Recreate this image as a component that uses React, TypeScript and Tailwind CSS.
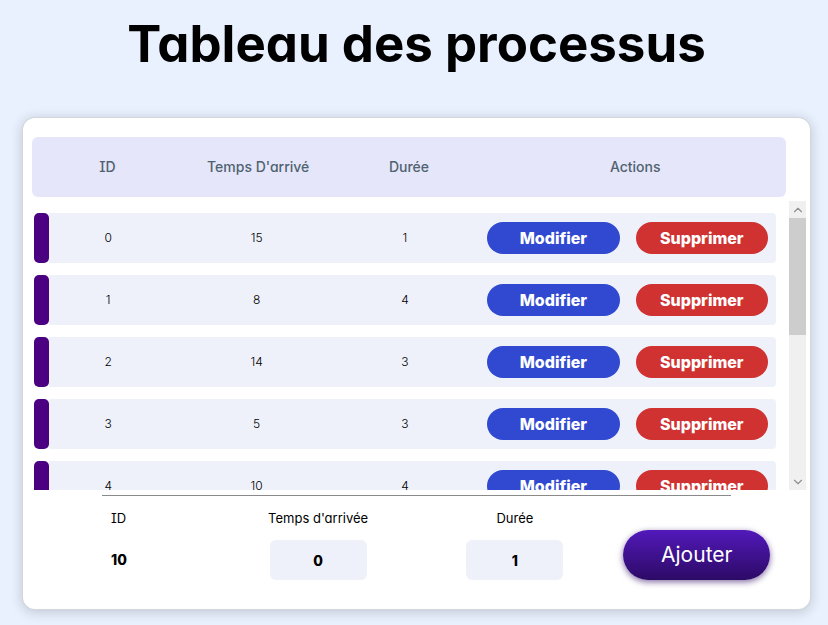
import { useRef, useState } from "react";
import type { UIEvent } from "react";
import { ChevronDown, ChevronUp } from "lucide-react";

type Process = { id: number; arrival: number; duration: number };

const processes: Process[] = [
  { id: 0, arrival: 15, duration: 1 },
  { id: 1, arrival: 8, duration: 4 },
  { id: 2, arrival: 14, duration: 3 },
  { id: 3, arrival: 5, duration: 3 },
  { id: 4, arrival: 10, duration: 4 },
  { id: 5, arrival: 7, duration: 2 },
  { id: 6, arrival: 3, duration: 5 },
  { id: 7, arrival: 12, duration: 1 },
  { id: 8, arrival: 9, duration: 2 },
  { id: 9, arrival: 6, duration: 4 },
];

const ROW_PITCH = 62;
const THUMB_SHARE = 46;

function ProcessRow({ process }: { process: Process }) {
  return (
    <tr className="h-[50px] bg-[#eef1f9]">
      <td className="bg-white p-0">
        <div className="flex h-[50px] items-center bg-linear-to-r from-white from-10% to-[#eef1f9] to-10%">
          <span className="h-full w-[15px] rounded-[5px] bg-[#4b0082]" />
          <span className="flex-1 pr-[15px] text-center">{process.id}</span>
        </div>
      </td>
      <td className="p-0">{process.arrival}</td>
      <td className="p-0">{process.duration}</td>
      <td className="px-2 py-0">
        <button type="button" className="block h-8 w-full rounded-full bg-[#3149d1] text-base font-extrabold text-white">
          Modifier
        </button>
      </td>
      <td className="rounded-r px-2 py-0">
        <button type="button" className="block h-8 w-full rounded-full bg-[#d03131] text-base font-extrabold text-white">
          Supprimer
        </button>
      </td>
    </tr>
  );
}

function ProcessList() {
  const listRef = useRef<HTMLDivElement>(null);
  const [progress, setProgress] = useState(0);

  const onScroll = (event: UIEvent<HTMLDivElement>) => {
    const el = event.currentTarget;
    setProgress(el.scrollTop / (el.scrollHeight - el.clientHeight));
  };
  const scrollRows = (count: number) => listRef.current?.scrollBy({ top: count * ROW_PITCH });

  return (
    <div className="mt-1 flex h-[289px] gap-[13px]">
      <div ref={listRef} onScroll={onScroll} className="flex-1 overflow-y-auto pl-0.5 [scrollbar-width:none]">
        <table className="w-full table-fixed border-separate border-spacing-x-0 border-spacing-y-3 text-center text-xs font-light">
          <tbody>
            {processes.map((process) => (
              <ProcessRow key={process.id} process={process} />
            ))}
          </tbody>
        </table>
      </div>
      <div className="flex w-[17px] flex-col bg-[#f0f0f0] text-[#8f8f8f]">
        <button type="button" aria-label="Monter" onClick={() => scrollRows(-1)} className="flex h-[17px] items-center justify-center">
          <ChevronUp size={14} strokeWidth={2} />
        </button>
        <div className="flex-1">
          <div className="relative h-full">
            <div
              className="absolute inset-x-0 bg-[#cdcdcd]"
              style={{ height: `${THUMB_SHARE}%`, top: `${progress * (100 - THUMB_SHARE)}%` }}
            />
          </div>
        </div>
        <button type="button" aria-label="Descendre" onClick={() => scrollRows(1)} className="flex h-[17px] items-center justify-center">
          <ChevronDown size={14} strokeWidth={2} />
        </button>
      </div>
    </div>
  );
}

function NumberField({ id, label, value }: { id: string; label: string; value: string }) {
  return (
    <div className="flex flex-col items-center">
      <label htmlFor={id} className="h-8 text-[13px] leading-5">
        {label}
      </label>
      <input
        id={id}
        type="text"
        inputMode="numeric"
        defaultValue={value}
        className="h-10 w-[97px] rounded-md bg-[#eef1f9] text-center text-sm font-extrabold"
      />
    </div>
  );
}

export default function App() {
  return (
    <main className="min-h-screen bg-[#e9f1ff] pt-2 pr-[18px] pb-3 pl-[23px] font-['Inter','Liberation_Sans',sans-serif] text-black [font-feature-settings:'cv11','cv08']">
      <h1 className="text-center text-[51px] leading-[72px] font-bold">Tableau des processus</h1>
      <section className="mt-[38px] rounded-xl bg-white pt-[19px] pb-[29px] shadow-[0_0_0_1px_#d3d7dc,0_2px_12px_2px_rgba(0,0,0,0.16)]">
        <div className="pr-1 pl-[9px]">
          <div className="pr-5">
            <table className="w-full table-fixed border-separate border-spacing-0">
              <thead>
                <tr className="h-[60px] text-sm text-[#4f6270]">
                  <th scope="col" className="rounded-l-md bg-[#e6e6fa] p-0 font-medium">ID</th>
                  <th scope="col" className="bg-[#e6e6fa] p-0 font-medium">Temps D'arrivé</th>
                  <th scope="col" className="bg-[#e6e6fa] p-0 font-medium">Durée</th>
                  <th scope="col" colSpan={2} className="rounded-r-md bg-[#e6e6fa] p-0 font-medium">Actions</th>
                </tr>
              </thead>
            </table>
          </div>
          <ProcessList />
        </div>
        <hr className="mx-auto mt-[5px] w-4/5 border-[#8a8a8a]" />
        <form className="mt-3 grid grid-cols-4" onSubmit={(event) => event.preventDefault()}>
          <div className="pl-[88px]">
            <div className="h-8 text-[13px] leading-5">ID</div>
            <div className="text-sm leading-10 font-extrabold">10</div>
          </div>
          <NumberField id="arrival" label="Temps d'arrivée" value="0" />
          <NumberField id="duration" label="Durée" value="1" />
          <div className="flex items-end pl-[10px]">
            <button
              type="submit"
              className="h-[50px] w-[147px] rounded-full bg-linear-to-b from-[#5219bb] to-[#2d0a66] text-[21px] leading-7 text-white shadow-[0_2px_6px_rgba(45,10,102,0.6)]"
            >
              Ajouter
            </button>
          </div>
        </form>
      </section>
    </main>
  );
}
